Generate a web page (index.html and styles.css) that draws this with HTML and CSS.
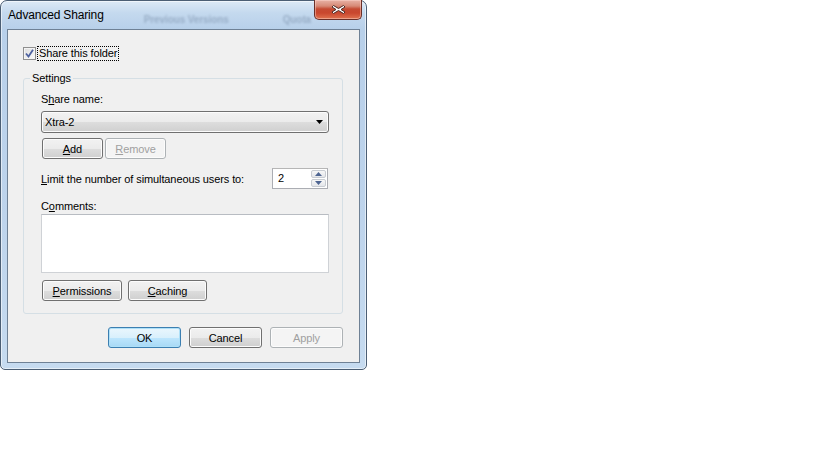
FILE: index.html
```html
<!DOCTYPE html>
<html>
<head>
<meta charset="utf-8">
<title>Advanced Sharing</title>
<link rel="stylesheet" href="styles.css">
</head>
<body>
<div class="window">
  <div class="titlebar">
    <span class="title">Advanced Sharing</span>
    <span class="ghost ghost-1">Previous Versions</span>
    <span class="ghost ghost-2">Quota</span>
    <div class="close" aria-label="Close">
      <svg width="17" height="11" viewBox="0 0 17 11">
        <path d="M3.5 1.5 L8.5 4.5 L13.5 1.5 L15 3 L11 5.5 L15 8 L13.5 9.5 L8.5 6.5 L3.5 9.5 L2 8 L6 5.5 L2 3 Z" fill="#fff" stroke="#4b2a25" stroke-width="1" stroke-linejoin="round"/>
      </svg>
    </div>
  </div>
  <div class="client">
    <label class="check-row">
      <span class="checkbox">
        <svg width="9" height="9" viewBox="0 0 9 9"><path d="M1 4.5 L3.5 7.5 L8 0.8" fill="none" stroke="#4d61a0" stroke-width="1.8"/></svg>
      </span>
      <span class="focus">Share this folder</span>
    </label>
    <fieldset class="group">
      <legend class="legend">Settings</legend>
      <div class="label">S<u>h</u>are name:</div>
      <div class="combo">
        <span>Xtra-2</span>
        <svg width="7" height="4" viewBox="0 0 7 4"><path d="M0 0 H7 L3.5 4 Z" fill="#000"/></svg>
      </div>
      <div class="btn-row top-btns">
        <button class="btn w61"><u>A</u>dd</button>
        <button class="btn w61" disabled><u>R</u>emove</button>
      </div>
      <div class="limit-row">
        <span><u>L</u>imit the number of simultaneous users to:</span>
        <div class="spin">
          <span class="spin-value">2</span>
          <div class="spin-btns">
            <span class="spin-btn"><svg width="7" height="4" viewBox="0 0 7 4"><path d="M0 4 H7 L3.5 0 Z" fill="#4e6592"/></svg></span>
            <span class="spin-btn"><svg width="7" height="4" viewBox="0 0 7 4"><path d="M0 0 H7 L3.5 4 Z" fill="#4e6592"/></svg></span>
          </div>
        </div>
      </div>
      <div class="label comments-label">C<u>o</u>mments:</div>
      <div class="textarea"></div>
      <div class="btn-row bottom-btns">
        <button class="btn w80"><u>P</u>ermissions</button>
        <button class="btn w79"><u>C</u>aching</button>
      </div>
    </fieldset>
    <div class="footer">
      <button class="btn footer-btn default">OK</button>
      <button class="btn footer-btn">Cancel</button>
      <button class="btn footer-btn" disabled>Apply</button>
    </div>
  </div>
</div>
</body>
</html>
```
FILE: styles.css
```css
* { box-sizing: border-box; }

body {
  margin: 0;
  background: #ffffff;
  font-family: "Liberation Sans", Arial, sans-serif;
  font-size: 11px;
  letter-spacing: -0.1px;
  color: #000;
}

.window {
  width: 367px;
  height: 370px;
  border: 1px solid #4b5e74;
  border-radius: 7px 7px 5px 5px;
  background: linear-gradient(180deg, #dce9f6 0px, #c4d9ee 12px, #b8d0ea 28px, #bed4ec 60%, #c6dbf0 100%);
  padding: 0 6px 6px;
  display: flex;
  flex-direction: column;
  box-shadow: inset 0 0 0 1px rgba(255,255,255,0.55);
}

.titlebar {
  height: 28px;
  display: flex;
  align-items: flex-start;
  white-space: nowrap;
}

.title {
  flex-shrink: 0;
  margin: 7px 0 0 1px;
  font-size: 12px;
  letter-spacing: -0.15px;
  line-height: 15px;
  color: #000;
}

.ghost {
  flex-shrink: 0;
  margin-top: 13px;
  font-size: 10px;
  line-height: 12px;
  color: #4f6480;
  opacity: 0.35;
  filter: blur(1.3px);
  font-weight: bold;
}
.ghost-1 { margin-left: 40px; }
.ghost-2 { margin-left: 54px; }

.close {
  flex-shrink: 0;
  margin: -1px -2px 0 auto;
  width: 48px;
  height: 20px;
  border: 1px solid #6a2f28;
  border-top: none;
  border-radius: 0 0 5px 5px;
  background: linear-gradient(180deg, #e8b2a6 0px, #d78a77 6px, #c54a32 9px, #c9472e 13px, #e0734f 19px);
  display: flex;
  align-items: center;
  justify-content: center;
  box-shadow: inset 0 0 0 1px rgba(255,220,210,0.45);
}

.client {
  flex: 1;
  background: #f0f0f0;
  border: 1px solid #6f8195;
  padding: 16px 16px 0 15px;
  display: flex;
  flex-direction: column;
}

.check-row {
  display: flex;
  align-items: center;
  height: 15px;
}

.checkbox {
  width: 13px;
  height: 13px;
  border: 1px solid #8f8f8f;
  background: linear-gradient(135deg, #dcdcdc, #fbfbfb);
  display: flex;
  align-items: center;
  justify-content: center;
  box-shadow: inset 0 0 0 1px #f4f4f4;
}

.focus {
  margin-left: 1px;
  padding: 0 1px;
  line-height: 13px;
  border: 1px dotted #000;
}

.group {
  margin: 10px 0 0 0;
  padding: 6px 13px 12px 17px;
  border: 1px solid #d5dfe5;
  border-radius: 3px;
  min-width: 0;
}

.legend {
  margin-left: -11px;
  padding: 0 2px;
  line-height: 15px;
}

.label {
  line-height: 15px;
  height: 15px;
}

.combo {
  margin-top: 4px;
  height: 22px;
  border: 1px solid #707070;
  border-radius: 3px;
  background: linear-gradient(180deg, #f2f2f2 0%, #ebebeb 50%, #dddddd 51%, #cfcfcf 100%);
  box-shadow: inset 0 0 0 1px #fcfcfc;
  display: flex;
  align-items: center;
  justify-content: space-between;
  padding: 0 5px 0 3px;
}

.btn-row {
  display: flex;
  gap: 2px;
}
.top-btns { margin-top: 5px; padding-left: 1px; }
.bottom-btns { margin-top: 7px; padding-left: 1px; gap: 6px; }

.btn {
  height: 21px;
  padding: 0;
  font-family: inherit;
  font-size: 11px;
  letter-spacing: inherit;
  color: #000;
  border: 1px solid #707070;
  border-radius: 3px;
  background: linear-gradient(180deg, #f2f2f2 0%, #ebebeb 50%, #dddddd 51%, #cfcfcf 100%);
  box-shadow: inset 0 0 0 1px #fcfcfc;
}
.btn:disabled {
  color: #a0a0a0;
  border-color: #adb2b5;
  background: #f4f4f4;
  box-shadow: inset 0 0 0 1px #fcfcfc;
}
.w61 { width: 61px; }
.w80 { width: 80px; }
.w79 { width: 79px; }

.limit-row {
  margin-top: 9px;
  display: flex;
  align-items: center;
  justify-content: space-between;
  height: 21px;
}

.spin {
  width: 56px;
  height: 21px;
  border: 1px solid #abadb3;
  border-top-color: #b6b6b6;
  background: #fff;
  display: flex;
  margin-right: 1px;
}
.spin-value {
  flex: 1;
  padding-left: 5px;
  line-height: 19px;
}
.spin-btns {
  width: 16px;
  display: flex;
  flex-direction: column;
  gap: 1px;
  padding: 1px 1px 1px 0;
}
.spin-btn {
  flex: 1;
  border: 1px solid #c8ccd2;
  border-radius: 2px;
  background: linear-gradient(180deg, #f7f7f7, #e4e6ea);
  display: flex;
  align-items: center;
  justify-content: center;
}

.comments-label {
  margin-top: 10px;
}

.textarea {
  height: 59px;
  background: #fff;
  border: 1px solid #cfd2d6;
  border-top-color: #b8bcc2;
}

.footer {
  margin-top: 13px;
  display: flex;
  justify-content: flex-end;
  gap: 8px;
}
.footer-btn { width: 73px; }
.default {
  border-color: #3c7fb1;
  box-shadow: inset 0 0 0 1px #aee0f8;
  background: linear-gradient(180deg, #eaf6fd 0%, #d9f0fc 50%, #bee6fd 51%, #a7d9f5 100%);
}
```
